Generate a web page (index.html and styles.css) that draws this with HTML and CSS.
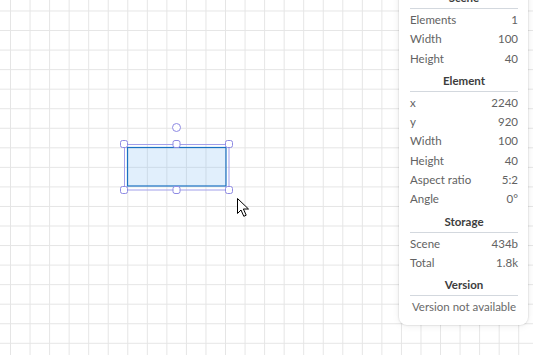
FILE: index.html
```html
<!DOCTYPE html>
<html lang="en">
<head>
<meta charset="utf-8">
<title>Canvas stats</title>
<link rel="stylesheet" href="styles.css">
</head>
<body>
<main class="canvas">
  <svg class="scene" width="533" height="355" viewBox="0 0 533 355" xmlns="http://www.w3.org/2000/svg">
    <rect class="shape" x="127.5" y="147.5" width="98.5" height="38.5"/>
    <rect class="selection" x="124.5" y="144.5" width="104.5" height="45.5"/>
    <g class="handles">
      <rect x="120.5" y="140.5" width="7" height="7" rx="2"/>
      <rect x="173" y="140.5" width="7" height="7" rx="2"/>
      <rect x="225.5" y="140.5" width="7" height="7" rx="2"/>
      <rect x="120.5" y="186.5" width="7" height="7" rx="2"/>
      <rect x="173" y="186.5" width="7" height="7" rx="2"/>
      <rect x="225.5" y="186.5" width="7" height="7" rx="2"/>
      <circle cx="176.5" cy="127.5" r="4"/>
    </g>
    <path class="cursor" d="M237.5 198.5 L237.5 213.5 L241 210 L243.8 216.3 L246.2 215.2 L243.4 209 L248.5 209 Z"/>
  </svg>

  <aside class="stats">
    <section>
      <h3>Scene</h3>
      <div class="row"><span>Elements</span><span>1</span></div>
      <div class="row"><span>Width</span><span>100</span></div>
      <div class="row"><span>Height</span><span>40</span></div>
    </section>
    <section>
      <h3>Element</h3>
      <div class="row"><span>x</span><span>2240</span></div>
      <div class="row"><span>y</span><span>920</span></div>
      <div class="row"><span>Width</span><span>100</span></div>
      <div class="row"><span>Height</span><span>40</span></div>
      <div class="row"><span>Aspect ratio</span><span>5:2</span></div>
      <div class="row"><span>Angle</span><span>0°</span></div>
    </section>
    <section>
      <h3>Storage</h3>
      <div class="row"><span>Scene</span><span>434b</span></div>
      <div class="row"><span>Total</span><span>1.8k</span></div>
    </section>
    <section>
      <h3>Version</h3>
      <div class="row note">Version not available</div>
    </section>
  </aside>
</main>
</body>
</html>
```

FILE: styles.css
```css
html, body {
  margin: 0;
  padding: 0;
  width: 533px;
  height: 355px;
  overflow: hidden;
  background: #fff;
}

.canvas {
  position: relative;
  width: 533px;
  height: 355px;
  overflow: hidden;
  background-color: #ffffff;
  background-image:
    linear-gradient(to right, #e5e5e5 1px, transparent 1px),
    linear-gradient(to bottom, #e5e5e5 1px, transparent 1px);
  background-size: 19.55px 19.55px;
  background-position: 10px 10.5px;
}

.scene {
  position: absolute;
  left: 0;
  top: 0;
}

.shape {
  fill: rgba(120, 180, 240, 0.22);
  stroke: #1971c2;
  stroke-width: 1.2;
}

.selection {
  fill: none;
  stroke: #a29fea;
  stroke-width: 1;
}

.handles rect,
.handles circle {
  fill: #ffffff;
  stroke: #8e8ae3;
  stroke-width: 1;
}

.cursor {
  fill: #ffffff;
  stroke: #000000;
  stroke-width: 1;
  stroke-linejoin: round;
}

.stats {
  position: absolute;
  left: 399px;
  top: -15px;
  width: 129px;
  box-sizing: border-box;
  padding: 0 10px 8.5px 11px;
  background: #ffffff;
  border-radius: 8px;
  box-shadow: 0 0 0 1px rgba(0, 0, 0, 0.03), 0 0 3px rgba(0, 0, 0, 0.1), 0 1px 8px rgba(0, 0, 0, 0.06);
  font-family: Lato, "Liberation Sans", sans-serif;
  font-size: 11.5px;
  color: #626262;
}

.stats h3 {
  margin: 0 0 1px;
  padding: 3px 0 1px;
  line-height: 19px;
  font-size: 11.5px;
  font-weight: 700;
  color: #3d3d3d;
  text-align: center;
  border-bottom: 1px solid #d3d8de;
}

.row {
  display: flex;
  justify-content: space-between;
  height: 19.3px;
  line-height: 19.3px;
  white-space: nowrap;
}

.row.note {
  justify-content: center;
  color: #6a6a6a;
}
```
